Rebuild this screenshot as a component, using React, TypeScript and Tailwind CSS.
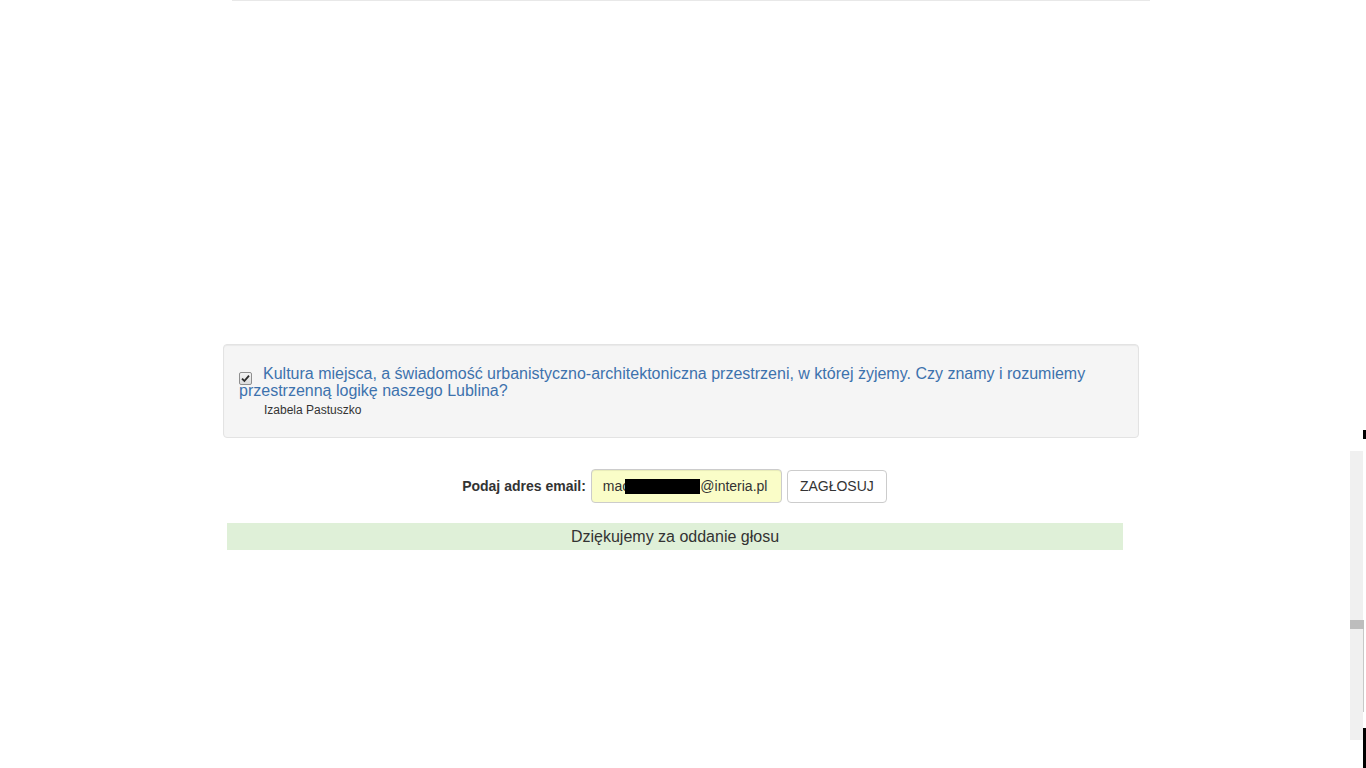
import React from "react";

function Checkbox() {
  return (
    <span className="mr-[11px] inline-flex h-[13px] w-[13px] translate-y-[4px] items-center justify-center rounded-[2px] border border-[#8f8f8f] bg-gradient-to-b from-[#f4f4f4] to-[#dcdcdc] align-baseline">
      <svg width="9" height="9" viewBox="0 0 9 9">
        <path d="M1 4.6 L3.4 7 L8 1.6" fill="none" stroke="#2b2b2b" strokeWidth="1.8" />
      </svg>
    </span>
  );
}

export default function App() {
  return (
    <div className="relative min-h-[768px] w-full overflow-hidden bg-white font-['Liberation_Sans',Arial,sans-serif] text-[#333]">
      {/* bottom edge of the panel above */}
      <div className="ml-[232px] h-[1px] w-[918px] border-x border-b border-[#e8e8e8]" />

      <div className="mt-[343px] ml-[223px] w-[916px]">
        <div className="rounded-[4px] border border-[#e3e3e3] bg-[#f5f5f5] px-[15px] pt-[20px] pb-[18px] shadow-[inset_0_1px_1px_rgba(0,0,0,0.05)]">
          <div className="text-[16px] leading-[17px] text-[#3d72ad]">
            <Checkbox />
            Kultura miejsca, a świadomość urbanistyczno-architektoniczna przestrzeni, w której żyjemy. Czy znamy i
            rozumiemy przestrzenną logikę naszego Lublina?
          </div>
          <div className="mt-[3px] pl-[25px] text-[12px] leading-[17px] text-[#333]">Izabela Pastuszko</div>
        </div>
      </div>

      <div className="mt-[31px] ml-[227px] flex w-[895px] items-center justify-center">
        <span className="mr-[5px] text-[14px] font-bold text-[#333]">Podaj adres email:</span>
        <div className="flex h-[34px] w-[191px] items-center rounded-[4px] border border-[#ccc] bg-[#fafdc8] pl-[11px] text-[14px] text-[#333] shadow-[inset_0_1px_1px_rgba(0,0,0,0.075)]">
          mac
          <span className="ml-[-4px] inline-block h-[15px] w-[75px] bg-black" />
          @interia.pl
        </div>
        <button className="ml-[5px] h-[33px] w-[100px] rounded-[4px] border border-[#ccc] bg-white text-[14px] text-[#333]">
          ZAGŁOSUJ
        </button>
      </div>

      <div className="mt-[20px] ml-[227px] flex h-[27px] w-[896px] items-center justify-center bg-[#dff0d8] text-[16px] text-[#333]">
        Dziękujemy za oddanie głosu
      </div>

      {/* scrollbar remnants at right edge */}
      <div className="absolute top-[430px] right-0 h-[9px] w-[3px] bg-black" />
      <div className="absolute top-[451px] right-[3px] h-[289px] w-[13px] bg-[#f0f0f0]" />
      <div className="absolute top-[620px] right-[2px] h-[9px] w-[14px] bg-[#bdbdbd]" />
      <div className="absolute top-[629px] right-[2px] h-[83px] w-[1px] bg-[#c8c8c8]" />
      <div className="absolute top-[728px] right-0 h-[40px] w-[3px] bg-black" />
    </div>
  );
}
